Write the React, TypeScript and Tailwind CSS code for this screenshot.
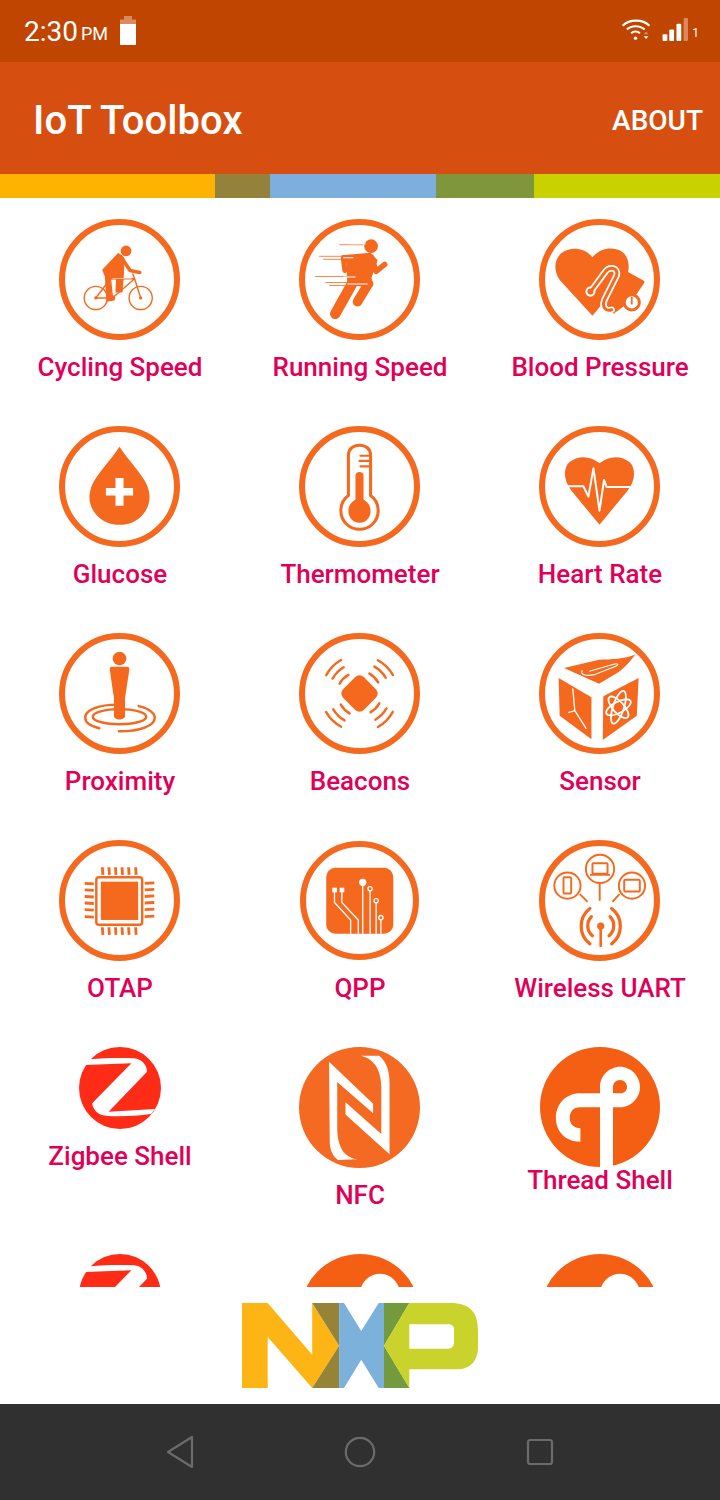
import React from 'react';

const orange = '#f5691f';

const Ring = ({ r = 57 }: { r?: number }) => (
  <circle cx="60" cy="60" r={r} fill="none" stroke={orange} strokeWidth="6" />
);

// drawn on a 120 grid, shown a pixel larger like the scaled bitmaps in the app
const IconBox = ({ children }: { children: React.ReactNode }) => (
  <svg viewBox="0 0 120 120" width={121} height={121} className="-ml-px block shrink-0">
    {children}
  </svg>
);

const CyclingIcon = () => (
  <IconBox>
    <Ring />
    <circle cx="66.5" cy="31.7" r="5.3" fill={orange} />
    <path d="M58.8 33.500 L65 39 L64.500 53 L63 73 L56 73 L56.500 59.500 L51 60 L53 81 L47 82 L45.500 57 L42.800 50.300 Z" fill={orange} />
    <path d="M61 37 L70.500 51 L80 53" fill="none" stroke={orange} strokeWidth="3.600" strokeLinecap="round" strokeLinejoin="round" />
    <g fill="none" stroke={orange} strokeWidth="1.400">
      <circle cx="36.5" cy="78.3" r="11.500" />
      <circle cx="81" cy="78.3" r="11.500" />
      <path d="M36.500 78.300 L51 59.300 L75 59.300 L81 78.300 M53 78.300 L75 59.300 M36.500 78.300 L53 78.300 L51 59.300 M75 59.300 L73 54" />
    </g>
    <path d="M53 59 L72 59" stroke="#ffffff" strokeWidth="0.800" opacity="0.7" />
    <circle cx="36.5" cy="78.3" r="1.600" fill={orange} />
    <circle cx="81" cy="78.3" r="1.600" fill={orange} />
    <circle cx="53" cy="78.3" r="2.800" fill={orange} />
  </IconBox>
);

const RunningIcon = () => (
  <IconBox>
    <Ring />
    <circle cx="71.5" cy="27" r="6.800" fill={orange} />
    <path d="M42 36 L71 33.500 L78 41 L72 58 L73 67 L48 66 L47 44 Z" fill={orange} />
    <g fill="none" stroke={orange} strokeLinecap="round" strokeLinejoin="round">
      <path d="M72 38 L76.500 52 L85 45" strokeWidth="5.400" />
      <path d="M44 39 L45.500 51" strokeWidth="5" />
      <path d="M55 60 L36 94" strokeWidth="10.500" />
      <path d="M54 60 L69 64 L58 82" strokeWidth="9.500" />
    </g>
    <g stroke={orange} strokeWidth="0.800">
      <path d="M40 25.500 H64 M20 37 H50 M24 40 H50 M16 57 H53 M26 63 H66 M30 66 H62" />
    </g>
    <g stroke="#ffffff" strokeWidth="1">
      <path d="M48 24.500 H66 M44 38.500 H54 M44 57.500 H56 M48 64.500 H68" />
    </g>
  </IconBox>
);

const BloodPressureIcon = () => (
  <IconBox>
    <Ring />
    <path d="M53 96 L21 61 C14 52 15 40 22 34 C31 27 45 28 53 38 C61 28 75 27 83 33 C89 38 90 46 88 54 Z" fill={orange} />
    <path d="M87 51.700 L103.500 61 Q105.500 62 104 64 L93 80 L74 94 L62 86 Z" fill={orange} />
    <g fill="none" strokeLinecap="round" strokeLinejoin="round">
      <path d="M52 71 L66 52 C70 47 79 48 77 56 L65 80 C62 87 66 92 72 90" stroke="#ffffff" strokeWidth="6.500" />
      <circle cx="51" cy="72" r="3.500" fill="#ffffff" stroke="#ffffff" strokeWidth="3" />
      <path d="M52 71 L66 52 C70 47 79 48 77 56 L65 80 C62 87 66 92 72 90" stroke={orange} strokeWidth="3" />
      <circle cx="51" cy="72" r="3" fill={orange} />
    </g>
    <circle cx="92" cy="82.700" r="7.500" fill="#ffffff" stroke={orange} strokeWidth="3" />
    <path d="M92 78 V84" stroke={orange} strokeWidth="1.800" strokeLinecap="round" />
  </IconBox>
);

const GlucoseIcon = () => (
  <IconBox>
    <Ring />
    <path d="M60 20.500 C52 33 38 47 33 58 C28 70 30 80 37 88 C43 95 51 98 60 98 C69 98 77 95 83 88 C90 80 92 70 87 58 C82 47 68 33 60 20.500 Z" fill={orange} />
    <path d="M56 51.500 H64 V61.500 H73.500 V69 H64 V79 H56 V69 H46.500 V61.500 H56 Z" fill="#ffffff" />
  </IconBox>
);

const ThermometerIcon = () => (
  <IconBox>
    <Ring />
    <path d="M49 69 V29 C49 22.500 54 19 60 19 C66 19 71 22.500 71 29 V69 C76 72.500 78.500 78 78.500 84 C78.500 94.500 70 102.500 60 102.500 C50 102.500 41.500 94.500 41.500 84 C41.500 78 44 72.500 49 69 Z" fill="none" stroke={orange} strokeWidth="3" />
    <path d="M56 73 V49 C56 44.500 64 44.500 64 49 V73 C68 75.500 71 79 71 84.500 C71 91 66 96 60 96 C54 96 49 91 49 84.500 C49 79 52 75.500 56 73 Z" fill={orange} />
    <path d="M61 29.500 H70 M60 34.500 H70 M61 40 H70" stroke={orange} strokeWidth="2.200" strokeLinecap="round" />
  </IconBox>
);

const HeartRateIcon = () => (
  <IconBox>
    <Ring />
    <path d="M60 98 L32 64 C24 54 24 42 30 36 C38 29 51 29 60 37 C69 29 82 29 90 36 C96 42 96 54 88 64 Z" fill={orange} />
    <path d="M22 59.800 H44 L49 70 L54 42 L60 84 L64.500 53.500 L67 60.500 H98" fill="none" stroke="#ffffff" strokeWidth="2" strokeLinejoin="round" />
  </IconBox>
);

const ProximityIcon = () => (
  <IconBox>
    <Ring />
    <g fill="none" stroke={orange} strokeWidth="2.400" strokeLinecap="round">
      <ellipse cx="60" cy="83" rx="26.500" ry="7.500" />
      <path d="M40 94.500 C30 92 26 88 26 84 C26 76 40 71 58 71" />
      <path d="M79 72.500 C90 75 95 80 95 84 C95 92 80 97.500 59.500 97.500" />
    </g>
    <path d="M52 33.500 H68 Q70 33.500 69.800 36 L66.500 58 L65.500 64 V82 C65.500 87 54.500 87 54.500 82 V64 L53.500 58 L50.300 36 Q50 33.500 52 33.500 Z" fill={orange} />
    <circle cx="60" cy="25.300" r="6.800" fill={orange} />
  </IconBox>
);

const BeaconsIcon = () => (
  <IconBox>
    <Ring />
    <rect x="45.500" y="45.500" width="29" height="29" rx="6" transform="rotate(45 60 60)" fill={orange} />
    <g fill="none" stroke={orange} strokeWidth="2.400" strokeLinecap="round">
      {[0, 90, 180, 270].map((a) => (
        <g key={a} transform={`rotate(${a} 60 60)`}>
          <path d="M69.800 40.300 A22 22 0 0 1 78.500 49" />
          <path d="M74.800 33.300 A30.500 30.500 0 0 1 86 44.300" />
          <path d="M78.200 27 A38 38 0 0 1 93.200 41.700" />
        </g>
      ))}
    </g>
  </IconBox>
);

const SensorIcon = () => (
  <IconBox>
    <Ring />
    <path d="M24.800 34.700 L59.500 26.500 C72 26 85 26 95.500 21.300 C89 30 82 38 72 43 L59.500 50.300 Z" fill={orange} />
    <path d="M19.500 44.700 L52 63.700 V105.300 L20.500 82 Z" fill={orange} />
    <path d="M63.800 62.700 L98.800 44.700 L97 82 L63.200 106 Z" fill={orange} />
    <path d="M43 37 C40 42 48 43 56 41 L76 33 C80 31 78 30 74 31 L50 38" fill="none" stroke="#ffffff" strokeWidth="1.100" />
    <path d="M33.500 55 L35.500 77 L29 79 M35.500 77 L47 95" fill="none" stroke="#ffffff" strokeWidth="1.300" />
    <g fill="none" stroke="#ffffff" strokeWidth="1.800">
      <ellipse cx="78.800" cy="73.700" rx="5.500" ry="17" transform="rotate(18 78.800 73.700)" />
      <ellipse cx="78.800" cy="73.700" rx="5.500" ry="13.500" transform="rotate(-42 78.800 73.700)" />
      <ellipse cx="78.800" cy="73.700" rx="5.500" ry="13.500" transform="rotate(62 78.800 73.700)" />
    </g>
  </IconBox>
);

const OtapIcon = () => (
  <IconBox>
    <Ring />
    <rect x="37" y="37" width="45.500" height="47" rx="2.500" fill="none" stroke={orange} strokeWidth="2.400" />
    <rect x="41.500" y="41.300" width="37" height="38" fill={orange} />
    <g stroke={orange} strokeWidth="2.800">
      {[43, 49.5, 56, 62.5, 69, 76].map((x) => (
        <path key={x} d={`M${x} 27 L${x + 0.5} 34.500 M${x} 86.500 L${x + 0.5} 94`} />
      ))}
      {[43, 49.5, 56, 62.5, 69, 76].map((y) => (
        <path key={y} d={`M25.500 ${y} L34.500 ${y + 0.5} M85 ${y} L94.500 ${y - 0.5}`} />
      ))}
    </g>
  </IconBox>
);

const QppIcon = () => (
  <IconBox>
    <Ring r={56} />
    <rect x="27" y="27.500" width="66.500" height="65.500" rx="9" fill={orange} />
    <g fill="none" stroke="#ffffff" strokeWidth="1.300">
      <path d="M35.200 50 V62 L51.200 79.300 V93" />
      <path d="M42.500 50 V62 L58.800 79.300 V93" />
      <path d="M63.200 42 V93 M70.500 48.300 V93 M76.500 60.300 V93 M81.200 77 V93" />
      <circle cx="70.500" cy="48.300" r="2.100" fill={orange} />
      <circle cx="76.500" cy="60.300" r="2.100" fill={orange} />
      <circle cx="81.200" cy="77" r="2.100" fill={orange} />
    </g>
    <circle cx="63.200" cy="42" r="3.600" fill="#ffffff" />
    <rect x="33" y="47.300" width="4.600" height="4.600" fill="#ffffff" />
    <rect x="40.300" y="47.300" width="4.600" height="4.600" fill="#ffffff" />
  </IconBox>
);

const WirelessUartIcon = () => (
  <IconBox>
    <Ring />
    <g fill="none" stroke={orange} strokeWidth="1.900">
      <circle cx="28.200" cy="45.300" r="13" />
      <circle cx="60.500" cy="28.700" r="14" />
      <circle cx="92.200" cy="45.300" r="13" />
      <path d="M40.500 53.700 L48.200 61.300 M60.200 43 V60.300 M79.800 53.700 L72.800 61.300" />
      <rect x="24.300" y="37" width="7.600" height="16" rx="1" />
      <rect x="53" y="23" width="15" height="10.500" rx="1" />
      <path d="M50.500 34.500 H70.500" />
      <rect x="84.500" y="39.500" width="15.500" height="11.500" rx="1" />
    </g>
    <g fill="none" stroke={orange} strokeWidth="3.200" strokeLinecap="round">
      <path d="M52 76 A13 13 0 0 0 53 95" />
      <path d="M70.500 76 A13 13 0 0 1 69.500 95" />
      <path d="M50.500 68 A22 22 0 0 0 50.500 103" />
      <path d="M72 68 A22 22 0 0 1 72 103" />
    </g>
    <circle cx="61.200" cy="85.300" r="3.600" fill={orange} />
    <path d="M61.200 86 V105" stroke={orange} strokeWidth="2.600" strokeLinecap="round" />
  </IconBox>
);

const ZigbeeIcon = () => (
  <svg viewBox="0 0 82 82" width="82" height="82" className="block shrink-0">
    <circle cx="41" cy="41" r="41" fill="#fe2b17" />
    <path d="M10.800 12.300 C25 11 42 10.500 54.900 11.300 C63 12 68 18 68 24.700 L29.600 64.700 L76 62 L72 67 C58 69 44 69.500 28.300 69 C19 68.500 14 63 13.200 56.300 L52.400 16.300 L5.900 18 Z" fill="#ffffff" />
  </svg>
);

const NfcIcon = () => (
  <IconBox>
    <circle cx="60" cy="60" r="60" fill="#f56a22" />
    <path d="M29.800 14.700 L73.500 56.300 V65.700 L37.900 34.700 V80 C38 95 42 109 57.800 111.300 L38.600 112 C33 108 31 102 30.500 95 Z" fill="#ffffff" />
    <path d="M61.200 8.700 H79.600 C87 15 89.800 24 89.800 36 V106.300 L46.100 67 V54.700 L81.600 86.300 V40 C81.600 25 76 12 61.200 8.700 Z" fill="#ffffff" />
  </IconBox>
);

const ThreadIcon = () => (
  <svg viewBox="0 0 120 120" width="120" height="120" className="block shrink-0">
    <circle cx="60" cy="60" r="60" fill="#f55f13" />
    <path
      fillRule="evenodd"
      d="M60 120 V60.300 H40 C33 60.300 29.800 65 29.800 71 C29.800 77 34 81.300 40.400 81.300 V94.700 C25 94.700 15.900 84 15.900 71 C15.900 57 26 46.300 40 46.300 H60 V40 C60 29 69 19.700 80 19.700 C91 19.700 100 29 100 40 C100 51 91 60.300 80 60.300 H73 V120 Z M73 46.300 H80 C84 46.300 87 44 87 40 C87 36 84 33 80 33 C76 33 73 36 73 40 Z"
      fill="#ffffff"
    />
  </svg>
);

const NxpLogo = () => (
  <svg viewBox="0 0 236 85" width="236" height="85" className="block">
    <path d="M0 0 H25.700 L70.200 51.700 V0 L97.100 42.700 L70.200 85 L25.700 34 V85 H0 Z" fill="#fdb515" />
    <path d="M70.200 0 H97.100 V42.700 Z M97.100 42.700 V85 H70.200 Z" fill="#958437" />
    <path d="M97.100 0 H102 L119.200 28 L136.700 0 H142 V85 H136.700 L119.200 56.700 L102 85 H97.100 Z" fill="#7bb1db" />
    <path d="M142 0 H167.300 L142 42.700 L167.300 85 H142 Z" fill="#739a3c" />
    <path
      fillRule="evenodd"
      d="M167.300 0 H208 C228 0 236 9 236 28 V44 C236 58 228 66.300 215 66.300 H167.300 V85 L142 42.700 Z M167.300 21.300 V45.700 H206 C210 45.700 212 43 212 39 V27 C212 23 210 21.300 206 21.300 Z"
      fill="#c9d32b"
    />
  </svg>
);

const items = [
  { label: 'Cycling Speed', icon: <CyclingIcon />, gap: 'mt-[11px]' },
  { label: 'Running Speed', icon: <RunningIcon />, gap: 'mt-[11px]' },
  { label: 'Blood Pressure', icon: <BloodPressureIcon />, gap: 'mt-[11px]' },
  { label: 'Glucose', icon: <GlucoseIcon />, gap: 'mt-[11px]' },
  { label: 'Thermometer', icon: <ThermometerIcon />, gap: 'mt-[11px]' },
  { label: 'Heart Rate', icon: <HeartRateIcon />, gap: 'mt-[11px]' },
  { label: 'Proximity', icon: <ProximityIcon />, gap: 'mt-[11px]' },
  { label: 'Beacons', icon: <BeaconsIcon />, gap: 'mt-[11px]' },
  { label: 'Sensor', icon: <SensorIcon />, gap: 'mt-[11px]' },
  { label: 'OTAP', icon: <OtapIcon />, gap: 'mt-[11px]' },
  { label: 'QPP', icon: <QppIcon />, gap: 'mt-[11px]' },
  { label: 'Wireless UART', icon: <WirelessUartIcon />, gap: 'mt-[11px]' },
  { label: 'Zigbee Shell', icon: <ZigbeeIcon />, gap: 'mt-[11px]' },
  { label: 'NFC', icon: <NfcIcon />, gap: 'mt-[11px]' },
  { label: 'Thread Shell', icon: <ThreadIcon />, gap: 'mt-[-3px]' },
  { label: '', icon: <ZigbeeIcon />, gap: '' },
  { label: '', icon: <ThreadIcon />, gap: '' },
  { label: '', icon: <ThreadIcon />, gap: '' },
];

export default function App() {
  return (
    <div className="flex h-[1500px] w-[720px] flex-col overflow-hidden bg-white font-['Roboto',sans-serif]">
      {/* Status bar */}
      <div className="flex h-[62px] shrink-0 items-center justify-between bg-[#bf4500] pl-6 pr-[21px] text-white">
        <div className="flex items-center">
          <span className="mt-[2px] text-[28px] leading-none">2:30</span>
          <span className="ml-[3px] mt-[5px] text-[18px] leading-none">PM</span>
          <svg width="16" height="29" viewBox="0 0 16 29" className="mb-[2px] ml-3">
            <path d="M4 0 H12 V3.500 H16 V8 H0 V3.500 H4 Z" fill="#d98a5e" />
            <path d="M0 8 H16 V28 Q16 29 15 29 H1 Q0 29 0 28 Z" fill="#ffffff" />
          </svg>
        </div>
        <div className="mb-[3px] flex items-end">
          <svg width="31" height="23" viewBox="0 0 31 24" fill="none" stroke="#ffffff" strokeWidth="2.200">
            <path d="M1 8 C8 1 22 1 29 8" />
            <path d="M5.500 12 C10 7.500 19 7.500 24 12" />
            <path d="M10 16 C12.500 13.500 16.500 13.500 19 16" />
            <circle cx="14.500" cy="21" r="1.800" fill="#ffffff" stroke="none" />
            <path d="M25.500 14 L28 17 H23 Z" fill="#d98a5e" stroke="none" />
            <path d="M25.500 22 L28 19 H23 Z" fill="#ffffff" stroke="none" />
          </svg>
          <svg width="27" height="23" viewBox="0 0 27 24" className="ml-[10px]">
            <rect x="0" y="17" width="5" height="7" rx="1" fill="#ffffff" />
            <rect x="7" y="12" width="5" height="12" rx="1" fill="#ffffff" />
            <rect x="14.500" y="6" width="5" height="18" rx="1" fill="#ffffff" />
            <rect x="22" y="0" width="4.500" height="24" rx="1" fill="#d98a5e" />
          </svg>
          <span className="ml-[3px] text-[12px] leading-[15px]">1</span>
        </div>
      </div>

      {/* App bar */}
      <div className="flex h-[112px] shrink-0 items-center justify-between bg-[#d64f11] pl-[33px] pr-[17px] pt-[5px] text-white">
        <span className="text-[40px] font-medium leading-none tracking-[0.1px]">IoT Toolbox</span>
        <span className="text-[28px] font-medium leading-none">ABOUT</span>
      </div>

      {/* Colour stripe */}
      <div className="flex h-6 shrink-0">
        <div className="w-[215px] bg-[#fdb300]" />
        <div className="w-[55px] bg-[#94823b]" />
        <div className="w-[166px] bg-[#7eaedc]" />
        <div className="w-[98px] bg-[#7f963c]" />
        <div className="flex-1 bg-[#c9d200]" />
      </div>

      {/* Tool grid, scrolled so the last row is cut */}
      <div className="min-h-0 flex-1 overflow-hidden">
        <div className="grid auto-rows-[207px] grid-cols-3 pt-[21px]">
          {items.map((item, i) => (
            <div key={i} className="flex flex-col items-center">
              {item.icon}
              {item.label && (
                <span className={`${item.gap} text-[26px] font-medium leading-[32px] text-[#e00058]`}>{item.label}</span>
              )}
            </div>
          ))}
        </div>
      </div>

      {/* NXP logo */}
      <div className="flex h-[117px] shrink-0 justify-center bg-white pt-4">
        <NxpLogo />
      </div>

      {/* Navigation bar */}
      <div className="grid h-24 shrink-0 grid-cols-3 items-center justify-items-center bg-[#303030] px-[90px]">
        <svg width="28" height="34" viewBox="0 0 28 34" fill="none" stroke="#6b6b6b" strokeWidth="2.200" strokeLinejoin="round">
          <path d="M26 2 V32 L2 17 Z" />
        </svg>
        <svg width="32" height="32" viewBox="0 0 32 32" fill="none" stroke="#6b6b6b" strokeWidth="2.200">
          <circle cx="16" cy="16" r="14.200" />
        </svg>
        <svg width="28" height="28" viewBox="0 0 28 28" fill="none" stroke="#6b6b6b" strokeWidth="2.200">
          <rect x="2" y="2" width="24" height="24" rx="2" />
        </svg>
      </div>
    </div>
  );
}
